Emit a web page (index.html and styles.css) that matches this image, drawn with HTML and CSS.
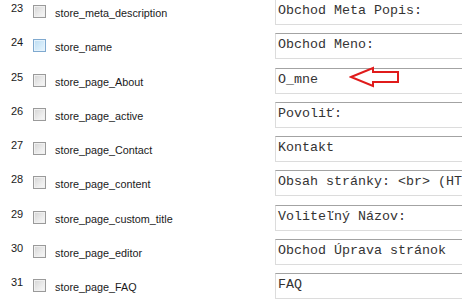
FILE: index.html
```html
<!DOCTYPE html>
<html>
<head>
<meta charset="utf-8">
<link rel="stylesheet" href="styles.css">
</head>
<body>
<div class="list">
  <div class="row"><span class="num">23</span><span class="cb"></span><span class="label">store_meta_description</span><div class="field">Obchod Meta Popis:</div></div>
  <div class="row"><span class="num">24</span><span class="cb hover"></span><span class="label">store_name</span><div class="field">Obchod Meno:</div></div>
  <div class="row"><span class="num">25</span><span class="cb"></span><span class="label">store_page_About</span><div class="field">O_mne</div></div>
  <div class="row"><span class="num">26</span><span class="cb"></span><span class="label">store_page_active</span><div class="field">Povoliť:</div></div>
  <div class="row"><span class="num">27</span><span class="cb"></span><span class="label">store_page_Contact</span><div class="field">Kontakt</div></div>
  <div class="row"><span class="num">28</span><span class="cb"></span><span class="label">store_page_content</span><div class="field">Obsah stránky: &lt;br&gt; (HT</div></div>
  <div class="row"><span class="num">29</span><span class="cb"></span><span class="label">store_page_custom_title</span><div class="field">Voliteľný Názov:</div></div>
  <div class="row"><span class="num">30</span><span class="cb"></span><span class="label">store_page_editor</span><div class="field">Obchod Úprava stránok</div></div>
  <div class="row"><span class="num">31</span><span class="cb"></span><span class="label">store_page_FAQ</span><div class="field">FAQ</div></div>
</div>
<svg class="arrow" width="56" height="24" viewBox="0 0 56 24">
  <polygon points="2,11 24,2 24,6 49,6 49,16 24,16 24,20" fill="none" stroke="#e01b1b" stroke-width="2" stroke-linejoin="miter"/>
</svg>
</body>
</html>
```
FILE: styles.css
```css
html, body {
  margin: 0;
  padding: 0;
  background: #ffffff;
  overflow: hidden;
}
body {
  position: relative;
  width: 462px;
  height: 300px;
  font-family: "Liberation Sans", Arial, sans-serif;
  color: #1a1a1a;
}
.list {
  display: grid;
  grid-auto-rows: 34.25px;
  margin-top: -1px;
}
.row {
  display: flex;
  align-items: flex-start;
}
.num {
  flex: none;
  width: 22px;
  padding-left: 11px;
  margin-top: 3px;
  font-size: 11px;
  line-height: 13px;
}
.cb {
  flex: none;
  box-sizing: border-box;
  width: 13px;
  height: 13px;
  margin-top: 6px;
  margin-right: 9px;
  border: 1px solid #9a9a9a;
  background: linear-gradient(135deg, #d4d4d4 0%, #ececec 60%, #f8f8f8 100%);
  box-shadow: inset 0 0 0 1px #f0f0f0;
}
.cb.hover {
  border-color: #7fa9cf;
  background: linear-gradient(135deg, #bcdcf2 0%, #d6ecfa 60%, #e8f5fd 100%);
  box-shadow: inset 0 0 0 1px #e6f3fc;
}
.label {
  flex: none;
  width: 220px;
  margin-top: 8px;
  font-size: 10.8px;
  line-height: 13px;
  white-space: nowrap;
}
.field {
  flex: none;
  box-sizing: border-box;
  width: 260px;
  height: 26px;
  padding: 3px 0 0 2px;
  border: 1px solid #dcdcdc;
  border-top-color: #a3a3a3;
  background: #ffffff;
  font-family: "Liberation Mono", "Courier New", monospace;
  font-size: 13.333px;
  line-height: 16px;
  color: #333333;
  white-space: nowrap;
  overflow: hidden;
}
.arrow {
  position: absolute;
  left: 349px;
  top: 66px;
}
```
